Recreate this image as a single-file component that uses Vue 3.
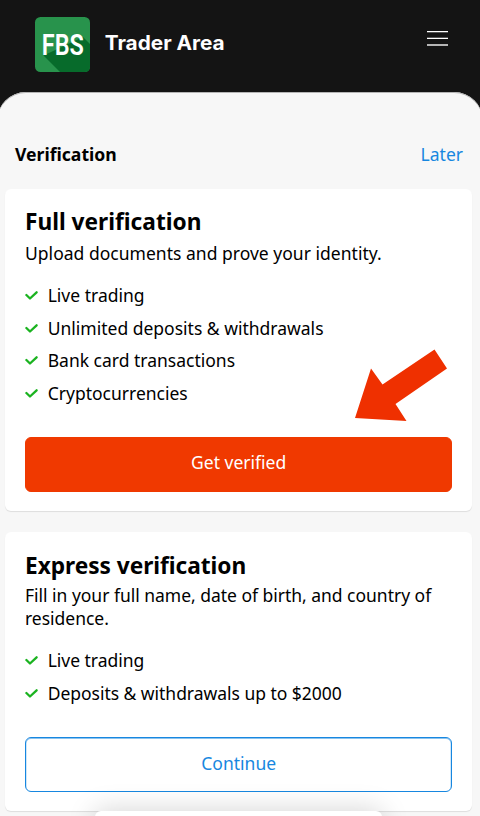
<template>
  <div class="page">
    <header class="header">
      <svg class="logo" viewBox="0 0 55 55">
        <rect width="55" height="55" rx="5.5" fill="#28934c" />
        <path d="M48 20L55 27V49.500Q55 55 49.500 55H25L8.500 38.500Z" fill="#076b2b" />
        <text x="6.800" y="38" textLength="42" lengthAdjust="spacingAndGlyphs">FBS</text>
      </svg>
      <svg class="brand" viewBox="0 0 130 30">
        <text x="-0.300" y="21" textLength="120" lengthAdjust="spacingAndGlyphs">Trader Area</text>
      </svg>
      <div class="menu">
        <span></span>
        <span></span>
        <span></span>
      </div>
    </header>

    <main class="panel">
      <div class="top-row">
        <h1>Verification</h1>
        <a class="later">Later</a>
      </div>

      <section v-for="card in cards" :key="card.title" class="card" :class="card.type">
        <h2>{{ card.title }}</h2>
        <p class="description">{{ card.description }}</p>
        <ul>
          <li v-for="item in card.items" :key="item">
            <svg class="check" viewBox="0 0 13 10">
              <path d="M1.400 5L5 8.500L11.600 2.300" />
            </svg>
            <span>{{ item }}</span>
          </li>
        </ul>
        <button>{{ card.action }}</button>
      </section>
    </main>

    <svg class="arrow" viewBox="0 0 94 74">
      <path d="M80.500 1.500L93 20.500L41.500 56L52.500 73L1 70L17 20.500L28.500 36.500Z" fill="#ef3000" />
    </svg>
    <div class="bottom-sheet"></div>
  </div>
</template>

<script setup>
const cards = [
  {
    type: 'full',
    title: 'Full verification',
    description: 'Upload documents and prove your identity.',
    items: [
      'Live trading',
      'Unlimited deposits & withdrawals',
      'Bank card transactions',
      'Cryptocurrencies'
    ],
    action: 'Get verified'
  },
  {
    type: 'express',
    title: 'Express verification',
    description: 'Fill in your full name, date of birth, and country of residence.',
    items: ['Live trading', 'Deposits & withdrawals up to $2000'],
    action: 'Continue'
  }
]
</script>

<style>
body {
  margin: 0;
  background: #141414;
}
</style>

<style scoped>
.page {
  position: relative;
  width: 480px;
  height: 816px;
  overflow: hidden;
  background: #141414;
  font-family: "Noto Sans", "Open Sans", sans-serif;
  font-size: 17.5px;
  color: #000;
}

.header {
  display: flex;
  height: 92px;
  box-sizing: border-box;
  padding: 17px 32px 0 35px;
}

.logo {
  width: 55px;
  height: 55px;
  overflow: visible;
}

.logo text {
  fill: #fff;
  font: 600 30px Roboto, sans-serif;
}

.brand {
  width: 130px;
  height: 30px;
  margin: 12px 0 0 15px;
  overflow: visible;
}

.brand text {
  fill: #fff;
  font: 700 20px Inter, sans-serif;
}

.menu {
  display: flex;
  flex-direction: column;
  gap: 6px;
  margin: 14px 0 0 auto;
}

.menu span {
  width: 21px;
  height: 1px;
  background: #fff;
  box-shadow: 0 1px 0 #555;
}

.menu span:nth-child(2) {
  box-shadow: 0 -1px 0 #555;
}

.menu span:nth-child(3) {
  margin-top: -1px;
  background: #b5b5b5;
  box-shadow: 0 1px 0 #b5b5b5;
}

.panel {
  height: 724px;
  margin: 0 -3px;
  padding: 0 11px 0 8px;
  box-sizing: border-box;
  border-radius: 29px 29px 0 0;
  background: #f7f7f7;
  box-shadow: inset 0 1px 0 #b5b5b5;
}

.top-row {
  display: flex;
  justify-content: space-between;
  height: 97px;
  box-sizing: border-box;
  padding: 50px 9px 0 10px;
  line-height: 24px;
}

h1 {
  margin: 0;
  font-size: 17.6px;
  font-weight: 700;
}

.later {
  color: #1787e0;
}

.card {
  height: 322px;
  box-sizing: border-box;
  padding: 18px 19px 0 20px;
  margin-bottom: 21px;
  border-radius: 6px;
  background: #fff;
  box-shadow: 0 1px 1px rgba(0, 0, 0, 0.1);
}

.card.express {
  height: 279px;
  padding-top: 19px;
}

h2 {
  margin: 0;
  font-size: 22.7px;
  line-height: 29px;
  font-weight: 700;
}

.express h2 {
  letter-spacing: -0.04px;
}

.description {
  margin: 6px 0 0;
  line-height: 23px;
  letter-spacing: 0.02px;
}

.express .description {
  margin-top: 4px;
  letter-spacing: -0.02px;
}

ul {
  list-style: none;
  margin: 14px 0 0;
  padding: 0;
}

li {
  display: flex;
  align-items: center;
  height: 32.600px;
}

.express li {
  letter-spacing: -0.03px;
}

.check {
  width: 13px;
  height: 10px;
  margin-right: 9.700px;
}

.check path {
  fill: none;
  stroke: #1bb320;
  stroke-width: 2.300;
  stroke-linecap: round;
  stroke-linejoin: round;
}

button {
  display: block;
  width: 427.4px;
  height: 55px;
  margin: 28px 0 0;
  padding: 0 0 5px;
  border: 1px solid #ef3900;
  border-radius: 6px;
  background: #f03900;
  color: #fff;
  font: inherit;
}

.express button {
  padding-bottom: 3px;
  border-color: #1787e0;
  background: transparent;
  color: #1787e0;
  box-shadow: inset 0 0.5px 0 0.4px rgba(23, 135, 224, 0.5);
}

.arrow {
  position: absolute;
  left: 354px;
  top: 348px;
  width: 94px;
  height: 74px;
}

.bottom-sheet {
  position: absolute;
  left: 95px;
  top: 811px;
  width: 287px;
  height: 30px;
  border-radius: 6px;
  background: #fff;
  box-shadow: 0 0 28px rgba(0, 0, 0, 0.18);
}
</style>
